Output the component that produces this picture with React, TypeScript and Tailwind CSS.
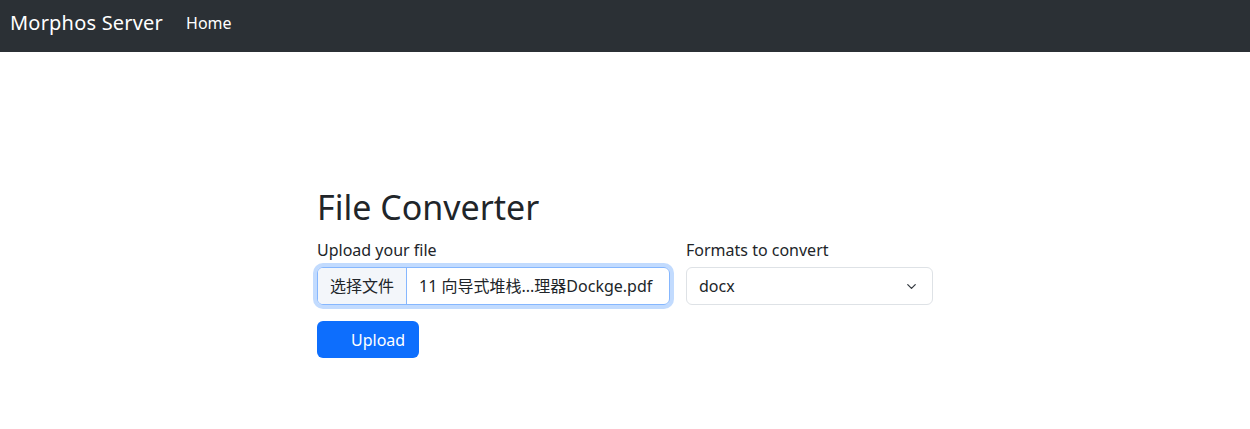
import { ChevronDown } from "lucide-react";

const font = { fontFamily: '"Noto Sans", "Noto Sans CJK SC", sans-serif' };

export default function App() {
  return (
    <div className="min-h-[429px] bg-white text-[#212529]" style={font}>
      <nav className="flex h-[52px] items-center bg-[#2b3035] px-[10px] pb-[7px]">
        <span className="text-[20px] tracking-[0.2px] text-white">Morphos Server</span>
        <a className="ml-[23px] text-[16px] text-white">Home</a>
      </nav>

      <main className="mx-auto w-[616px] pt-[131px]">
        <h1 className="mb-[7px] text-[34px] leading-[48px] font-normal">File Converter</h1>
        <div className="flex gap-[16px]">
          <div className="w-[353px]">
            <label className="mb-[5px] block text-[16px] leading-[24px]">Upload your file</label>
            <div className="flex h-[38px] items-stretch overflow-hidden rounded-[6px] border border-[#86b7fe] text-[16px] shadow-[0_0_0_4px_rgba(13,110,253,0.25)]">
              <span className="flex items-center border-r border-[#86b7fe] bg-[#f3f6fa] px-[12px]">选择文件</span>
              <span className="flex items-center truncate px-[12px]">11 向导式堆栈...理器Dockge.pdf</span>
            </div>
          </div>
          <div className="w-[247px]">
            <label className="mb-[5px] block text-[16px] leading-[24px]">Formats to convert</label>
            <div className="flex h-[38px] items-center justify-between rounded-[6px] border border-[#dee2e6] pl-[12px] pr-[13px] text-[16px]">
              <span>docx</span>
              <ChevronDown size={15} strokeWidth={2} className="text-[#343a40]" />
            </div>
          </div>
        </div>
        <button className="mt-[16px] flex h-[37px] w-[102px] items-center rounded-[6px] bg-[#0d6efd] pl-[34px] text-[16px] text-white">
          Upload
        </button>
      </main>
    </div>
  );
}
